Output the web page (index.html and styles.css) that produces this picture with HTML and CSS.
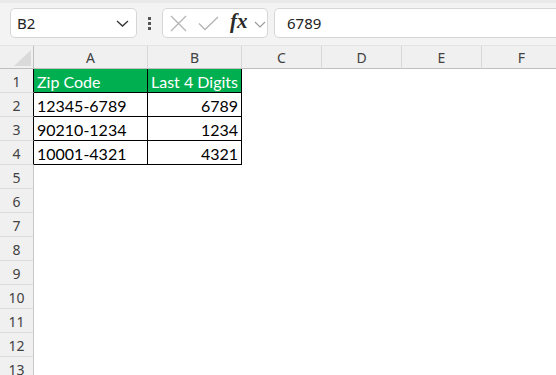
FILE: index.html
```html
<!DOCTYPE html>
<html>
<head>
<meta charset="utf-8">
<link rel="stylesheet" href="styles.css">
</head>
<body>
<div class="app">
  <div class="toolbar">
    <div class="namebox">
      <span class="namebox-text">B2</span>
      <svg class="chev" width="13" height="7" viewBox="0 0 13 7"><path d="M1 1 L6.5 6 L12 1" fill="none" stroke="#333" stroke-width="1.3"/></svg>
    </div>
    <div class="dots"><span></span><span></span><span></span></div>
    <div class="fbuttons">
      <svg class="ico-x" width="17" height="17" viewBox="0 0 17 17"><path d="M1 1 L16 16 M16 1 L1 16" stroke="#b4b4b4" stroke-width="1.3" fill="none"/></svg>
      <svg class="ico-check" width="21" height="15" viewBox="0 0 21 15"><path d="M1 7.5 L7 13.5 L20 1" stroke="#b4b4b4" stroke-width="1.3" fill="none"/></svg>
      <span class="fx">fx</span>
      <svg class="chev-small" width="12" height="7" viewBox="0 0 12 7"><path d="M1 1 L6 6 L11 1" fill="none" stroke="#9a9a9a" stroke-width="1.1"/></svg>
    </div>
    <div class="formula">6789</div>
  </div>
  <div class="grid">
    <div class="hdr corner"><div class="tri"></div></div>
    <div class="hdr col cw-a">A</div>
    <div class="hdr col cw-b">B</div>
    <div class="hdr col cw-n">C</div>
    <div class="hdr col cw-n">D</div>
    <div class="hdr col cw-n">E</div>
    <div class="hdr col cw-n">F</div>

    <div class="rh in">1</div>
    <div class="cell bd green">Zip Code</div>
    <div class="cell bd green">Last 4 Digits</div>
    <div class="cell"></div><div class="cell"></div><div class="cell"></div><div class="cell"></div>

    <div class="rh in">2</div>
    <div class="cell bd">12345-6789</div>
    <div class="cell bd num">6789</div>
    <div class="cell"></div><div class="cell"></div><div class="cell"></div><div class="cell"></div>

    <div class="rh in">3</div>
    <div class="cell bd">90210-1234</div>
    <div class="cell bd num">1234</div>
    <div class="cell"></div><div class="cell"></div><div class="cell"></div><div class="cell"></div>

    <div class="rh in">4</div>
    <div class="cell bd">10001-4321</div>
    <div class="cell bd num">4321</div>
    <div class="cell"></div><div class="cell"></div><div class="cell"></div><div class="cell"></div>

    <div class="rh">5</div><div class="cell"></div><div class="cell"></div><div class="cell"></div><div class="cell"></div><div class="cell"></div><div class="cell"></div>
    <div class="rh">6</div><div class="cell"></div><div class="cell"></div><div class="cell"></div><div class="cell"></div><div class="cell"></div><div class="cell"></div>
    <div class="rh">7</div><div class="cell"></div><div class="cell"></div><div class="cell"></div><div class="cell"></div><div class="cell"></div><div class="cell"></div>
    <div class="rh">8</div><div class="cell"></div><div class="cell"></div><div class="cell"></div><div class="cell"></div><div class="cell"></div><div class="cell"></div>
    <div class="rh">9</div><div class="cell"></div><div class="cell"></div><div class="cell"></div><div class="cell"></div><div class="cell"></div><div class="cell"></div>
    <div class="rh">10</div><div class="cell"></div><div class="cell"></div><div class="cell"></div><div class="cell"></div><div class="cell"></div><div class="cell"></div>
    <div class="rh">11</div><div class="cell"></div><div class="cell"></div><div class="cell"></div><div class="cell"></div><div class="cell"></div><div class="cell"></div>
    <div class="rh">12</div><div class="cell"></div><div class="cell"></div><div class="cell"></div><div class="cell"></div><div class="cell"></div><div class="cell"></div>
    <div class="rh">13</div><div class="cell"></div><div class="cell"></div><div class="cell"></div><div class="cell"></div><div class="cell"></div><div class="cell"></div>
  </div>
</div>
</body>
</html>
```

FILE: styles.css
```css
* { box-sizing: border-box; }
html, body { margin: 0; padding: 0; background: #fff; }
body { width: 556px; height: 375px; overflow: hidden; }
.app { width: 556px; height: 375px; overflow: hidden; }

.toolbar {
  height: 46px;
  width: 600px;
  background: #f3f3f3;
  border-top: 3px solid #e9e9e9;
  border-bottom: 1px solid #e4e4e4;
  display: flex;
  align-items: flex-start;
  padding-top: 5px;
  padding-left: 10px;
  font-family: "Noto Sans", sans-serif;
}
.toolbar > * { flex-shrink: 0; }
.namebox {
  width: 127px;
  height: 30px;
  background: #fff;
  border: 1px solid #d6d6d6;
  border-radius: 5px;
  display: flex;
  align-items: center;
  padding-left: 6px;
  padding-right: 7px;
  justify-content: space-between;
}
.namebox-text { font-size: 15px; color: #222; }
.chev { display: block; margin-top: 1px; }
.dots {
  width: 25px;
  height: 30px;
  display: flex;
  flex-direction: column;
  align-items: center;
  justify-content: center;
  gap: 2px;
}
.dots span { width: 3px; height: 3px; background: #555; display: block; }
.fbuttons {
  width: 106px;
  height: 30px;
  background: #fff;
  border: 1px solid #d6d6d6;
  border-radius: 5px;
  display: flex;
  align-items: center;
  padding-left: 7px;
}
.ico-x { display: block; margin-right: 11px; }
.ico-check { display: block; margin-right: 11px; }
.fx {
  font-family: "Liberation Serif", serif;
  font-style: italic;
  font-weight: bold;
  font-size: 21px;
  color: #2a2a2a;
  line-height: 1;
  margin-top: -3px;
  margin-right: 6px;
}
.chev-small { display: block; margin-top: 2px; }
.formula {
  margin-left: 6px;
  width: 300px;
  height: 30px;
  background: #fff;
  border: 1px solid #d6d6d6;
  border-radius: 5px;
  font-size: 15px;
  color: #222;
  display: flex;
  align-items: center;
  padding-left: 12px;
}

.grid {
  display: grid;
  grid-template-columns: 34px 114px 94px 80px 80px 80px 80px;
  grid-auto-rows: 24px;
  grid-template-rows: 23px;
  width: 562px;
}
.hdr {
  background: #f0f0f0;
  border-bottom: 1px solid #bfbfbf;
  font-family: "Noto Sans", sans-serif;
  font-size: 14px;
  color: #424242;
  display: flex;
  align-items: center;
  justify-content: center;
}
.hdr.col { border-right: 1px solid #d8d8d8; padding-top: 1px; }
.corner { position: relative; border-right: 1px solid #bfbfbf; }
.tri {
  position: absolute;
  right: 2px;
  bottom: 2px;
  width: 0;
  height: 0;
  border-left: 17px solid transparent;
  border-bottom: 16px solid #dadada;
}
.rh {
  background: #f0f0f0;
  border-right: 1px solid #c8c8c8;
  border-bottom: 1px solid #dcdcdc;
  font-family: "Noto Sans", sans-serif;
  font-size: 14px;
  color: #424242;
  display: flex;
  align-items: center;
  justify-content: center;
  padding-top: 1px;
}
.rh.in { border-right-color: #000; }
.cell {
  background: #fff;
  font-family: Lato, "Liberation Sans", sans-serif;
  font-size: 16px;
  color: #000;
  line-height: 23px;
  padding: 1px 3px 0 3px;
  white-space: nowrap;
  overflow: hidden;
}
.cell.bd { border-right: 1px solid #000; border-bottom: 1px solid #000; }
.cell.num { text-align: right; }
.cell.green { background: #00b050; color: #fff; }
```
